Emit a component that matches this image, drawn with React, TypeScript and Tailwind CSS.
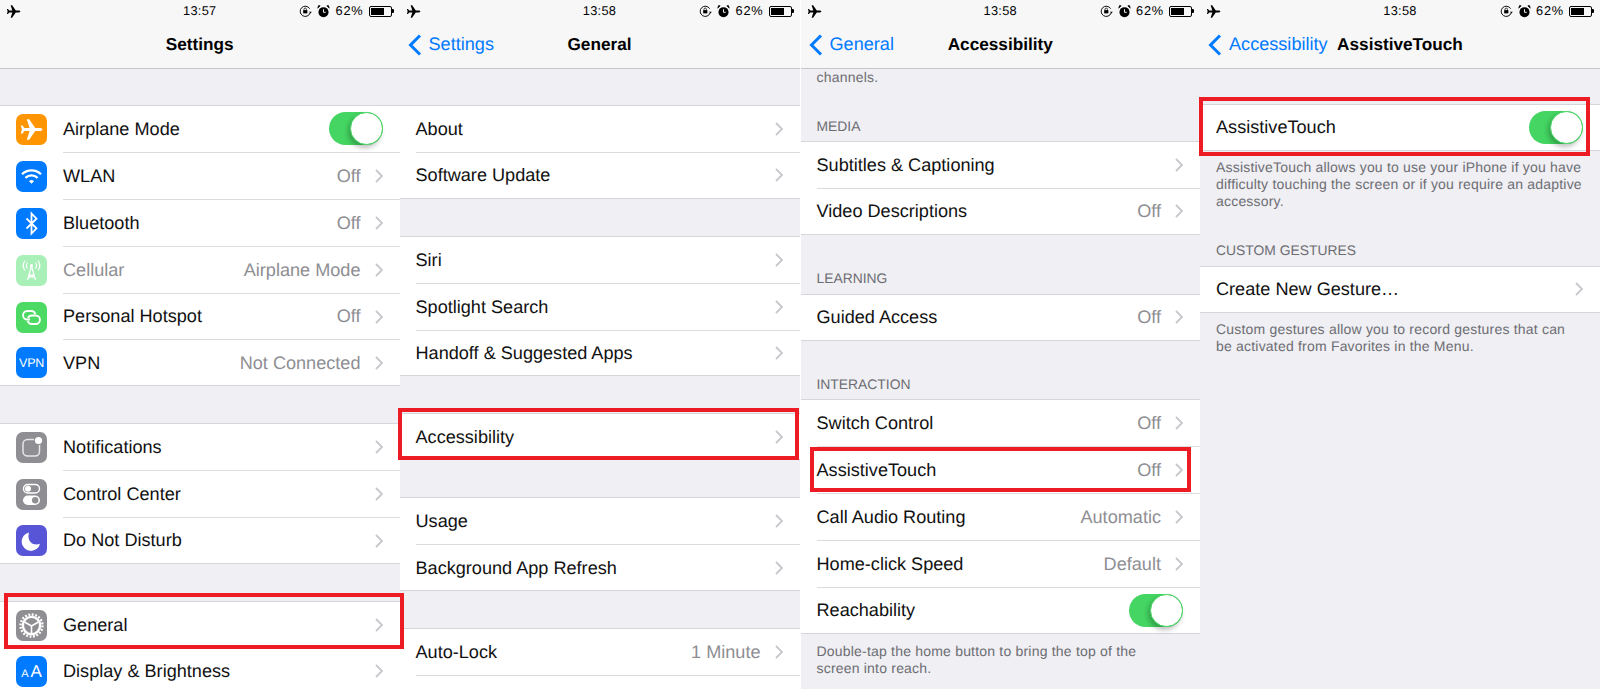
import React from "react";

const Plane = ({ className = "", fill = "#fff" }: { className?: string; fill?: string }) => (
  <svg viewBox="0 0 31 31" className={className}>
    <path fill={fill} d="M26.5 15.5c0-.9-1.3-1.5-2.6-1.5H19.2L13.2 5.3H10.8L13.6 14H8.4L6.5 11.4H4.8L5.9 15.5 4.8 19.6H6.5L8.4 17H13.6L10.8 25.7H13.2L19.2 17H23.9C25.2 17 26.5 16.4 26.5 15.5Z" />
  </svg>
);

const Chevron = () => (
  <svg viewBox="0 0 8 14" className="w-[8px] h-[14px] shrink-0">
    <path d="M1 1l6 6-6 6" fill="none" stroke="#c7c7cc" strokeWidth="1.8" />
  </svg>
);

const Back = () => (
  <svg viewBox="0 0 14 22" className="w-[14px] h-[22px] shrink-0">
    <path d="M12 1.5L2.5 11l9.5 9.5" fill="none" stroke="#007aff" strokeWidth="3" />
  </svg>
);

const Toggle = () => (
  <div className="relative w-[54px] h-[33px] rounded-full bg-[#44d562] shrink-0">
    <div className="absolute right-0 top-0 w-[33px] h-[33px] rounded-full bg-white border border-[#44d562] shadow-[-2px_3px_5px_rgba(0,0,0,0.25)]" />
  </div>
);

const Tile = ({ bg, children }: { bg: string; children: React.ReactNode }) => (
  <div className={`w-[31px] h-[31px] rounded-[7px] flex items-center justify-center overflow-hidden text-white ${bg}`}>{children}</div>
);

const S = "w-[31px] h-[31px]";
const IconAir = () => <Tile bg="bg-[#ff9500]"><Plane className={S} /></Tile>;
const IconWifi = () => (
  <Tile bg="bg-[#007aff]">
    <svg viewBox="0 0 31 31" className={S} fill="none" stroke="#fff" strokeWidth="2.3">
      <path d="M6 13.2a13.6 13.6 0 0 1 19 0" />
      <path d="M9.4 16.9a8.8 8.8 0 0 1 12.2 0" />
      <path d="M13 20.2a3.6 3.6 0 0 1 5 0l-2.5 2.6z" fill="#fff" stroke="none" />
    </svg>
  </Tile>
);
const IconBt = () => (
  <Tile bg="bg-[#007aff]">
    <svg viewBox="0 0 31 31" className={S} fill="none" stroke="#fff" strokeWidth="1.8">
      <path d="M10.5 10.5L20.5 20.3 15.5 25.5V5.5L20.5 10.7 10.5 20.5" />
    </svg>
  </Tile>
);
const IconCell = () => (
  <Tile bg="bg-[#a9efb8]">
    <svg viewBox="0 0 31 31" className={S} fill="none" stroke="#fff" strokeWidth="1.2">
      <path d="M15.5 11L11.5 25M15.5 11l4 14M13 20h5M12.2 23l6.5-3M18.8 23l-6.5-3" />
      <circle cx="15.5" cy="10.5" r="1.5" fill="#fff" stroke="none" />
      <path d="M11.5 13.5a5 5 0 0 1 0-6M19.5 13.5a5 5 0 0 0 0-6M9 15.5a8.5 8.5 0 0 1 0-10M22 15.5a8.5 8.5 0 0 0 0-10" />
    </svg>
  </Tile>
);
const IconHot = () => (
  <Tile bg="bg-[#4cd964]">
    <svg viewBox="0 0 31 31" className={S} fill="none" stroke="#fff" strokeWidth="1.9">
      <path d="M14 17.5h-2.7a4.2 4.2 0 0 1 0-8.5h4a4.2 4.2 0 0 1 4 3" />
      <path d="M12 16a4.2 4.2 0 0 1 4-2.5h3.7a4.2 4.2 0 0 1 0 8.5h-4a4.2 4.2 0 0 1-4-3" />
    </svg>
  </Tile>
);
const IconVpn = () => (
  <Tile bg="bg-[#007aff]"><span className="text-[12.5px] leading-none tracking-[-0.3px]">VPN</span></Tile>
);
const IconNotif = () => (
  <Tile bg="bg-[#8e8e93]">
    <svg viewBox="0 0 31 31" className={S} fill="none">
      <rect x="7" y="7.5" width="16.5" height="16.5" rx="4.5" stroke="#e6e6e8" strokeWidth="1.5" />
      <circle cx="22.5" cy="8.5" r="4.7" fill="#8e8e93" />
      <circle cx="22.5" cy="8.5" r="3.6" fill="#fff" />
    </svg>
  </Tile>
);
const IconCtrl = () => (
  <Tile bg="bg-[#8e8e93]">
    <svg viewBox="0 0 31 31" className={S} fill="none">
      <rect x="7.5" y="5.5" width="16" height="8.5" rx="4.25" stroke="#fff" strokeWidth="1.4" />
      <circle cx="12" cy="9.75" r="3" fill="#fff" />
      <rect x="7" y="16.5" width="17" height="9.5" rx="4.75" fill="#fff" />
      <circle cx="19.2" cy="21.25" r="3.2" fill="#8e8e93" />
    </svg>
  </Tile>
);
const IconMoon = () => (
  <Tile bg="bg-[#5856d6]">
    <svg viewBox="0 0 31 31" className={S}>
      <path fill="#fff" d="M13 7.5a9.3 9.3 0 1 0 11 11.2c-1.2.5-2.3.7-3.5.7-4.6 0-8-3.5-8-8 0-1.4.2-2.7.5-3.9z" />
    </svg>
  </Tile>
);
const IconGear = () => (
  <Tile bg="bg-[#8e8e93]">
    <svg viewBox="0 0 31 31" className={S} fill="none" stroke="#fff">
      <circle cx="15.5" cy="15.5" r="11" strokeWidth="2.4" strokeDasharray="1.9 1.55" />
      <circle cx="15.5" cy="15.5" r="8.6" strokeWidth="2.4" />
      <path d="M15.5 16L9 12.2M15.5 16L22 12.2M15.5 16V23" strokeWidth="1.6" />
    </svg>
  </Tile>
);
const IconAa = () => (
  <Tile bg="bg-[#007aff]">
    <span className="flex items-baseline leading-none"><span className="text-[11px] mr-[2px]">A</span><span className="text-[17px]">A</span></span>
  </Tile>
);

const RotLock = () => (
  <svg viewBox="0 0 14 14" className="w-[13px] h-[13px]" fill="none" stroke="#000" strokeWidth="1">
    <path d="M12 8.5A5.5 5.5 0 1 1 11.5 4" />
    <path d="M10.8 7.2h3l-1.5 2z" fill="#000" stroke="none" />
    <rect x="4.5" y="5.5" width="4.5" height="3.5" fill="#000" stroke="none" />
    <path d="M5.4 5.5V4.6a1.3 1.3 0 0 1 2.6 0v.9" strokeWidth=".8" />
  </svg>
);
const Alarm = () => (
  <svg viewBox="0 0 14 14" className="w-[13px] h-[13px] ml-[5px]">
    <circle cx="7" cy="7.7" r="5.4" fill="#000" />
    <path d="M.8 3.4L3.4.9 1.7.6zM13.2 3.4L10.6.9 12.3.6z" fill="#000" stroke="#000" strokeWidth=".8" />
    <path d="M7 4.5v3.4h2.4" fill="none" stroke="#fff" strokeWidth="1" />
  </svg>
);
const Battery = () => (
  <div className="flex items-center ml-[5px]">
    <div className="w-[23px] h-[11px] border border-black rounded-[2px] p-px">
      <div className="w-[13px] h-full bg-black" />
    </div>
    <div className="w-[2px] h-[4px] bg-black rounded-r-[1px]" />
  </div>
);

const StatusBar = ({ time }: { time: string }) => (
  <div className="grid grid-cols-[1fr_auto_1fr] items-center h-[22px] text-[12.8px] text-black">
    <div className="pl-[4px]"><Plane fill="#000" className="w-[19px] h-[19px]" /></div>
    <div className="tracking-[0.3px]">{time}</div>
    <div className="flex items-center justify-end pr-[6px]">
      <RotLock /><Alarm />
      <span className="ml-[5px] tracking-[0.8px]">62%</span>
      <Battery />
    </div>
  </div>
);

const NavBar = ({ time, title, back }: { time: string; title: string; back?: string }) => (
  <div className="bg-[#f7f7f8] border-b border-[#c6c6ca] h-[69px] shrink-0">
    <StatusBar time={time} />
    <div className="grid grid-cols-[1fr_auto_1fr] items-center h-[46px] text-[18.13px]">
      <div className="flex items-center pl-[8px] text-[#007aff]">
        {back && <><Back /><span className="ml-[7px]">{back}</span></>}
      </div>
      <div className="font-bold text-black text-[17.2px]">{title}</div>
      <div />
    </div>
  </div>
);

type RowT = { label?: string; value?: string; icon?: React.ReactNode; toggle?: boolean; dim?: boolean };

const Group = ({ rows, mt = "mt-[37px]" }: { rows: RowT[]; mt?: string }) => (
  <div className={`bg-white border-y border-[#d6d6da] shrink-0 ${mt}`}>
    {rows.map((r, i) => (
      <div key={r.label ?? "blank"} className="flex items-center">
        {r.icon && <div className="ml-[16px] shrink-0">{r.icon}</div>}
        <div className={`flex-1 flex items-center pr-[17px] ml-[16px] ${i < rows.length - 1 ? "h-[46.9px] border-b border-[#dcdcdf]" : "h-[44.9px]"}`}>
          <span className={`flex-1 pt-px text-[18.13px] ${r.dim ? "text-[#8e8e93]" : "text-[#111]"}`}>{r.label}</span>
          {r.value && <span className="pt-px text-[18.13px] text-[#8e8e93] mr-[14px]">{r.value}</span>}
          {r.toggle ? <Toggle /> : r.label ? <Chevron /> : null}
        </div>
      </div>
    ))}
  </div>
);

const Note = ({ lines, cls = "pt-[9px]" }: { lines: string[]; cls?: string }) => (
  <div className={`px-[16px] text-[14px] leading-[17px] tracking-[0.2px] text-[#6d6d72] shrink-0 ${cls}`}>
    {lines.map((l) => <div key={l} className="whitespace-nowrap">{l}</div>)}
  </div>
);

const Head = ({ text, h }: { text: string; h: string }) => (
  <div className={`flex items-end px-[16px] pb-[6.5px] text-[13.87px] leading-[17px] text-[#6d6d72] shrink-0 ${h}`}>{text}</div>
);

const Panel = ({ children, cls = "w-[400px]" }: { children: React.ReactNode; cls?: string }) => (
  <div className={`h-[689px] bg-[#efeff4] flex flex-col overflow-hidden shrink-0 ${cls}`}>{children}</div>
);

const Mark = ({ cls }: { cls: string }) => (
  <div className={`absolute border-[4px] border-[#ed1c24] ${cls}`} />
);

export default function App() {
  return (
    <div className="relative w-[1600px] h-[696px] bg-white overflow-hidden flex font-['Liberation_Sans',Arial,sans-serif] [text-rendering:geometricPrecision]">
      <Panel cls="w-[399.5px]">
        <NavBar time="13:57" title="Settings" />
        <Group mt="mt-[36px]" rows={[
          { label: "Airplane Mode", icon: <IconAir />, toggle: true },
          { label: "WLAN", icon: <IconWifi />, value: "Off" },
          { label: "Bluetooth", icon: <IconBt />, value: "Off" },
          { label: "Cellular", icon: <IconCell />, value: "Airplane Mode", dim: true },
          { label: "Personal Hotspot", icon: <IconHot />, value: "Off" },
          { label: "VPN", icon: <IconVpn />, value: "Not Connected" },
        ]} />
        <Group rows={[
          { label: "Notifications", icon: <IconNotif /> },
          { label: "Control Center", icon: <IconCtrl /> },
          { label: "Do Not Disturb", icon: <IconMoon /> },
        ]} />
        <Group rows={[
          { label: "General", icon: <IconGear /> },
          { label: "Display & Brightness", icon: <IconAa /> },
        ]} />
      </Panel>

      <Panel>
        <NavBar time="13:58" title="General" back="Settings" />
        <Group mt="mt-[36px]" rows={[{ label: "About" }, { label: "Software Update" }]} />
        <Group rows={[{ label: "Siri" }, { label: "Spotlight Search" }, { label: "Handoff & Suggested Apps" }]} />
        <Group rows={[{ label: "Accessibility" }]} />
        <Group rows={[{ label: "Usage" }, { label: "Background App Refresh" }]} />
        <Group rows={[{ label: "Auto-Lock", value: "1 Minute" }, {}]} />
      </Panel>

      <div className="w-px h-[689px] bg-white shrink-0" />
      <Panel cls="w-[399.5px]">
        <NavBar time="13:58" title="Accessibility" back="General" />
        <Note lines={["channels."]} cls="pt-0" />
        <Head text="MEDIA" h="h-[55px]" />
        <Group mt="mt-0" rows={[{ label: "Subtitles & Captioning" }, { label: "Video Descriptions", value: "Off" }]} />
        <Head text="LEARNING" h="h-[59.2px]" />
        <Group mt="mt-0" rows={[{ label: "Guided Access", value: "Off" }]} />
        <Head text="INTERACTION" h="h-[58.4px]" />
        <Group mt="mt-0" rows={[
          { label: "Switch Control", value: "Off" },
          { label: "AssistiveTouch", value: "Off" },
          { label: "Call Audio Routing", value: "Automatic" },
          { label: "Home-click Speed", value: "Default" },
          { label: "Reachability", toggle: true },
        ]} />
        <Note lines={["Double-tap the home button to bring the top of the", "screen into reach."]} />
      </Panel>

      <Panel>
        <NavBar time="13:58" title="AssistiveTouch" back="Accessibility" />
        <Group mt="mt-[35px]" rows={[{ label: "AssistiveTouch", toggle: true }]} />
        <Note cls="pt-[8.5px]" lines={["AssistiveTouch allows you to use your iPhone if you have", "difficulty touching the screen or if you require an adaptive", "accessory."]} />
        <Head text="CUSTOM GESTURES" h="h-[55.6px]" />
        <Group mt="mt-0" rows={[{ label: "Create New Gesture…" }]} />
        <Note cls="pt-[8.5px]" lines={["Custom gestures allow you to record gestures that can", "be activated from Favorites in the Menu."]} />
      </Panel>

      <Mark cls="left-[4px] top-[593px] w-[400px] h-[56px]" />
      <Mark cls="left-[398px] top-[408px] w-[401px] h-[52px]" />
      <Mark cls="left-[810px] top-[447px] w-[381px] h-[45px]" />
      <Mark cls="left-[1199px] top-[97px] w-[391px] h-[59px]" />
    </div>
  );
}
